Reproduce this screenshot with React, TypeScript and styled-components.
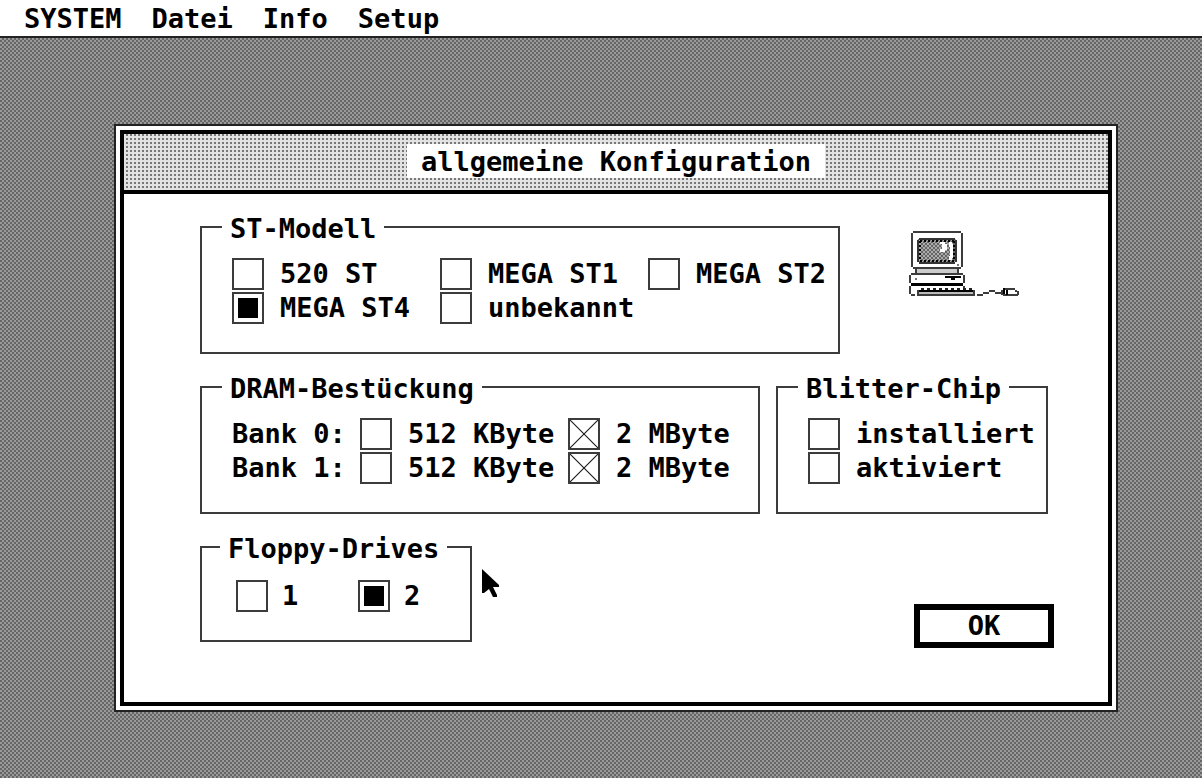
import React from "react";
import styled, { createGlobalStyle } from "styled-components";

const INK = "#000";
const LINE = "#3c3c3c";

const GlobalStyle = createGlobalStyle`
  * { box-sizing: border-box; }
  body {
    margin: 0;
    color: ${INK};
    background: #fff;
    font: bold 27px/32px "DejaVu Sans Mono", monospace;
  }
  button, input, fieldset, legend { font: inherit; color: inherit; }
`;

const Screen = styled.div`
  display: flex;
  flex-direction: column;
  min-height: 100vh;
`;

const MenuBar = styled.nav`
  display: flex;
  flex-wrap: wrap;
  gap: 0 30px;
  padding: 3px 24px 1px;
  background: #fff;
  border-bottom: 2px solid #222;
`;

const MenuItem = styled.button`
  padding: 0;
  border: 0;
  background: none;
`;

const Desktop = styled.main`
  flex: 1;
  padding: 86px 84px 66px 114px;
  background: repeating-conic-gradient(#666 0 25%, #9a9a9a 0 50%) 0 0 / 4px 4px;
`;

const Dialog = styled.section`
  padding: 4px;
  background: #fff;
  border: 2px solid #222;
`;

const Frame = styled.div`
  border: 4px solid ${INK};
`;

const TitleBar = styled.header`
  display: flex;
  justify-content: center;
  padding: 10px 0 12px;
  border-bottom: 4px solid ${INK};
  background: repeating-conic-gradient(#777 0 25%, #e2e2e2 0 100%) 0 0 / 4px 4px;
`;

const Title = styled.h1`
  margin: 0;
  padding: 2px 14px 0;
  background: #fff;
  font: inherit;
`;

const Body = styled.form`
  position: relative;
  display: flex;
  flex-direction: column;
  gap: 15px;
  padding: 15px 54px 54px 76px;
`;

const Row = styled.div<{ $spread?: boolean }>`
  display: flex;
  gap: 16px;
  justify-content: ${(p) => (p.$spread ? "space-between" : "flex-start")};
  align-items: flex-start;
`;

const Group = styled.fieldset<{ $width: number; $indent?: number; $top?: number }>`
  flex: 0 1 ${(p) => p.$width}px;
  min-width: 0;
  margin: 0;
  padding: ${(p) => p.$top ?? 13}px 0 28px ${(p) => p.$indent ?? 30}px;
  border: 2px solid ${LINE};
`;

const Legend = styled.legend<{ $shift?: number }>`
  margin-left: ${(p) => p.$shift ?? -10}px;
  padding: 4px 8px 0;
  white-space: nowrap;
`;

const Options = styled.div<{ $columns: string }>`
  display: grid;
  grid-template-columns: ${(p) => p.$columns};
  row-gap: 2px;
`;

const Option = styled.label<{ $gap?: number }>`
  display: flex;
  align-items: center;
  gap: ${(p) => p.$gap ?? 16}px;
  white-space: nowrap;
`;

const Box = styled.input`
  appearance: none;
  flex: none;
  width: 32px;
  height: 32px;
  margin: 0;
  border: 2px solid ${LINE};
  background: #fff;

  &[type="radio"]:checked {
    background: ${INK};
    box-shadow: inset 0 0 0 4px #fff;
  }

  &[type="checkbox"]:checked {
    background:
      linear-gradient(to top right, transparent calc(50% - 1px), #222 50%, transparent calc(50% + 1px)),
      linear-gradient(to bottom right, transparent calc(50% - 1px), #222 50%, transparent calc(50% + 1px)),
      #fff;
  }
`;

const OkButton = styled.button`
  width: 140px;
  margin-top: 75px;
  padding: 0;
  background: #fff;
  border: 6px solid ${INK};
`;

const Computer = styled.svg`
  flex: none;
  width: 112px;
  height: 66px;
  margin: 22px 33px 0 0;
`;

const Pointer = styled.svg`
  position: absolute;
  left: 358px;
  top: 375px;
  width: 18px;
  height: 30px;
`;

type Rect = [number, number, number, number];

const outline: Rect[] = [
  // monitor case
  [4, 0, 48, 2], [2, 2, 2, 34], [52, 2, 2, 34], [4, 36, 48, 2],
  // neck and base unit
  [6, 38, 2, 4], [48, 38, 2, 4],
  [2, 42, 52, 2], [0, 44, 2, 8], [54, 44, 2, 8],
  // cord on the left, connector on the right
  [0, 55, 2, 8], [2, 63, 4, 2], [54, 55, 2, 3],
  // keyboard
  [8, 59, 2, 6], [64, 59, 2, 6], [10, 63, 54, 2],
  // mouse cord
  [68, 63, 6, 2], [74, 61, 6, 2], [80, 59, 6, 2], [86, 61, 6, 2],
  // mouse
  [96, 57, 10, 2], [106, 59, 2, 2], [108, 60, 2, 4], [92, 59, 2, 5], [94, 63, 15, 2],
];

const solid: Rect[] = [
  [2, 52, 52, 3], [36, 45, 16, 2], [42, 47, 4, 2],
  [10, 59, 54, 2], [94, 57, 2, 6], [97, 59, 2, 5],
];

const rects = (list: Rect[], fill: string) =>
  list.map(([x, y, w, h]) => <rect key={`${x}-${y}`} x={x} y={y} width={w} height={h} fill={fill} />);

const ComputerIcon = () => (
  <Computer viewBox="0 0 112 66" shapeRendering="crispEdges" aria-hidden="true">
    <defs>
      <pattern id="raster" width="4" height="4" patternUnits="userSpaceOnUse">
        <rect width="4" height="4" fill="#aaa" />
        <path d="M0 0h2v2h-2zM2 2h2v2h-2z" fill="#666" />
      </pattern>
    </defs>
    {rects(outline, LINE)}
    <rect x="8" y="38" width="40" height="4" fill="#ccc" />
    {rects(solid, INK)}
    <rect x="10" y="61" width="54" height="2" fill="#bbb" />
    {[12, 18, 24, 30, 36, 42, 48, 54, 60].map((x) => (
      <rect key={x} x={x} y="57" width="3" height="2" fill="#222" />
    ))}
    <rect x="9" y="8" width="38" height="23" fill="url(#raster)" />
    <path d="M10 8H46M10 32H46M9 9V31M47 9V31" stroke="#333" strokeWidth="2" />
    <path d="M11 10H46M11 30H46M11 10V30M45 10V30" stroke={INK} strokeWidth="2" strokeDasharray="2 2" />
    <path d="M31 11h5v2h2v6h-2v2h-5v-3h2v-5h-2zM40 11h3v2h1v14h-1v2h-3v-4h1v-9h-1z" fill="#fff" />
    <rect x="48" y="33" width="2" height="2" fill="#777" />
    <rect x="6" y="47" width="2" height="2" fill="#777" />
  </Computer>
);

const Choice = ({ type = "radio", name, text, checked, gap }: {
  type?: "radio" | "checkbox";
  name: string;
  text: string;
  checked?: boolean;
  gap?: number;
}) => (
  <Option $gap={gap}>
    <Box type={type} name={name} defaultChecked={checked} />
    {text}
  </Option>
);

export default function App() {
  return (
    <Screen>
      <GlobalStyle />
      <MenuBar>
        {["SYSTEM", "Datei", "Info", "Setup"].map((item) => (
          <MenuItem key={item} type="button">{item}</MenuItem>
        ))}
      </MenuBar>
      <Desktop>
        <Dialog>
          <Frame>
            <TitleBar>
              <Title>allgemeine Konfiguration</Title>
            </TitleBar>
            <Body onSubmit={(e) => e.preventDefault()}>
              <Row $spread>
                <Group $width={640}>
                  <Legend>ST-Modell</Legend>
                  <Options $columns="208px 208px auto">
                    <Choice name="model" text="520 ST" />
                    <Choice name="model" text="MEGA ST1" />
                    <Choice name="model" text="MEGA ST2" />
                    <Choice name="model" text="MEGA ST4" checked />
                    <Choice name="model" text="unbekannt" />
                  </Options>
                </Group>
                <ComputerIcon />
              </Row>
              <Row>
                <Group $width={560}>
                  <Legend>DRAM-Bestückung</Legend>
                  <Options $columns="128px 208px auto">
                    {[0, 1].map((bank) => (
                      <React.Fragment key={bank}>
                        <span>Bank {bank}:</span>
                        <Choice type="checkbox" name={`bank${bank}-512k`} text="512 KByte" />
                        <Choice type="checkbox" name={`bank${bank}-2m`} text="2 MByte" checked />
                      </React.Fragment>
                    ))}
                  </Options>
                </Group>
                <Group $width={272}>
                  <Legend>Blitter-Chip</Legend>
                  <Options $columns="auto">
                    <Choice type="checkbox" name="installed" text="installiert" />
                    <Choice type="checkbox" name="active" text="aktiviert" />
                  </Options>
                </Group>
              </Row>
              <Row $spread>
                <Group $width={272} $indent={34} $top={15}>
                  <Legend $shift={-16}>Floppy-Drives</Legend>
                  <Options $columns="122px auto">
                    <Choice name="drives" text="1" gap={14} />
                    <Choice name="drives" text="2" gap={14} checked />
                  </Options>
                </Group>
                <OkButton type="submit">OK</OkButton>
              </Row>
              <Pointer viewBox="0 0 18 30" aria-hidden="true">
                <path d="M0 0L17 16V18H11L15 26V28H11L7 20L2 24H0Z" fill={INK} />
              </Pointer>
            </Body>
          </Frame>
        </Dialog>
      </Desktop>
    </Screen>
  );
}
